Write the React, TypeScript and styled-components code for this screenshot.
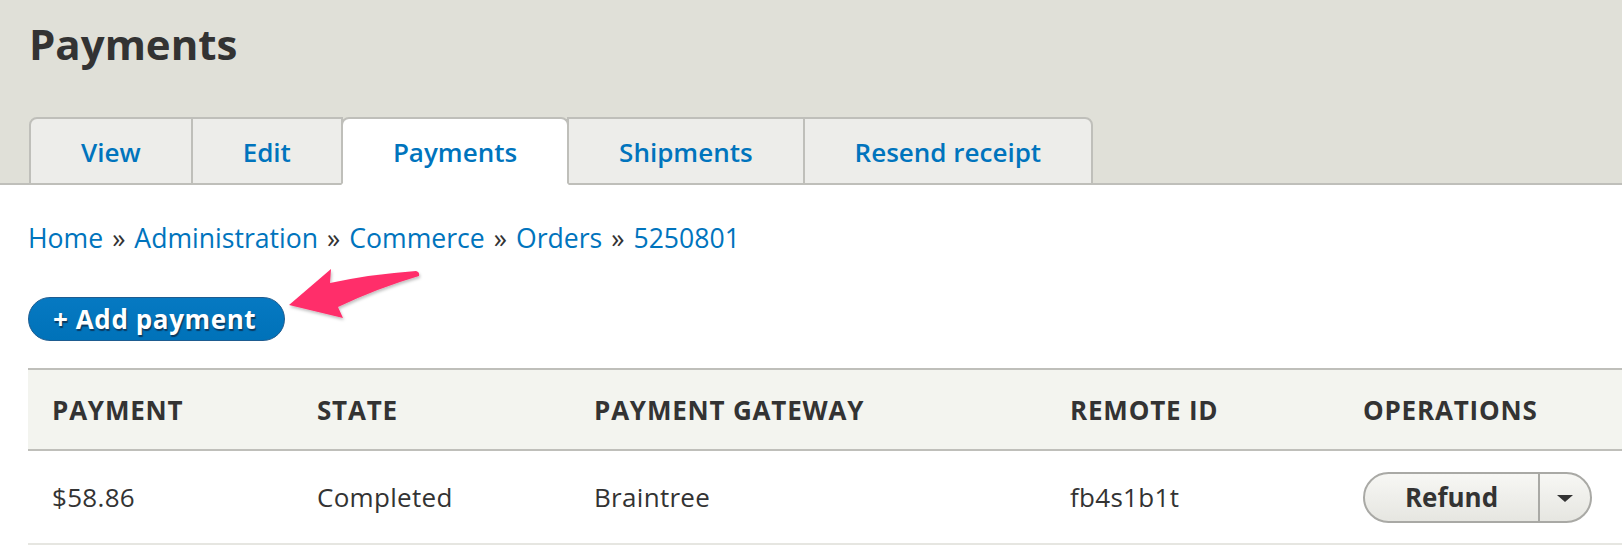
import React from "react";
import styled, { createGlobalStyle } from "styled-components";

const GlobalStyle = createGlobalStyle`
  html, body {
    margin: 0;
    padding: 0;
    background: #ffffff;
    overflow: hidden;
  }
  body {
    font-family: "Open Sans", "Noto Sans", "DejaVu Sans", sans-serif;
    color: #333333;
  }
`;

const Page = styled.div`
  position: relative;
  width: 1622px;
  height: 558px;
  overflow: hidden;
`;

const Header = styled.header`
  background: #e0e0d8;
  padding: 18px 0 0 29px;
  border-bottom: 2px solid #bfbfba;
`;

const Title = styled.h1`
  margin: 0;
  font-size: 42px;
  line-height: 52px;
  font-weight: 700;
  color: #333333;
`;

const Tabs = styled.ul`
  display: flex;
  list-style: none;
  margin: 47px 0 -2px 0;
  padding: 0;
`;

const Tab = styled.li<{ $active?: boolean }>`
  margin-left: -2px;
  &:first-child {
    margin-left: 0;
  }
  border: 2px solid #bfbfba;
  border-bottom-color: ${(p) => (p.$active ? "#ffffff" : "#bfbfba")};
  border-radius: ${(p) => (p.$active ? "8px 8px 0 0" : "0")};
  &:first-child {
    border-top-left-radius: 8px;
  }
  &:last-child {
    border-top-right-radius: 8px;
  }
  background: ${(p) => (p.$active ? "#ffffff" : "#ededea")};
  position: relative;
  z-index: ${(p) => (p.$active ? 1 : 0)};
`;

const TabLink = styled.a`
  display: block;
  padding: 17px 50px 15px;
  font-size: 26px;
  line-height: 32px;
  font-weight: 600;
  color: #0074bd;
  text-decoration: none;
`;

const Content = styled.main`
  padding: 37px 0 0 28px;
`;

const Breadcrumb = styled.nav`
  font-size: 26.6px;
  line-height: 32px;
  color: #333333;
`;

const Crumb = styled.a`
  color: #0074bd;
  text-decoration: none;
`;

const Sep = styled.span`
  color: #333333;
  margin: 0 9px;
`;

const ActionButton = styled.button`
  display: inline-block;
  margin-top: 43px;
  height: 44px;
  padding: 0 28px 0 24px;
  border: 1px solid #1e5c90;
  border-radius: 22px;
  background: linear-gradient(#0679c2, #0072b9);
  color: #ffffff;
  font-family: inherit;
  font-size: 26px;
  line-height: 42px;
  font-weight: 700;
  letter-spacing: 0.6px;
  text-shadow: 1px 2px 1px #0b3a60;
  cursor: pointer;
`;

const Table = styled.table`
  margin-top: 27px;
  width: 1594px;
  border-collapse: collapse;
  table-layout: fixed;
`;

const HeadCell = styled.th`
  text-align: left;
  background: #f3f4ef;
  border-top: 2px solid #bfbfba;
  border-bottom: 2px solid #bfbfba;
  height: 79px;
  padding: 0 0 0 24px;
  font-size: 26px;
  line-height: 32px;
  font-weight: 700;
  letter-spacing: 0.8px;
  text-transform: uppercase;
  color: #333333;
  vertical-align: middle;
`;

const Cell = styled.td`
  border-bottom: 2px solid #e6e6e1;
  height: 92px;
  padding: 0 0 0 24px;
  font-size: 26px;
  line-height: 32px;
  letter-spacing: 0.3px;
  color: #333333;
  vertical-align: middle;
`;

const Dropbutton = styled.div`
  display: inline-flex;
  height: 51px;
  border: 2px solid #a9a9a5;
  border-radius: 26px;
  background: linear-gradient(#f7f7f4, #e6e6e1);
  box-sizing: border-box;
  overflow: hidden;
  vertical-align: middle;
`;

const DropMain = styled.a`
  display: flex;
  align-items: center;
  justify-content: center;
  width: 173px;
  font-size: 26px;
  font-weight: 700;
  letter-spacing: 0;
  color: #333333;
  text-decoration: none;
  border-right: 2px solid #a9a9a5;
`;

const DropToggle = styled.span`
  display: flex;
  align-items: center;
  justify-content: center;
  width: 50px;
`;

const Caret = styled.span`
  width: 0;
  height: 0;
  border-left: 8px solid transparent;
  border-right: 8px solid transparent;
  border-top: 7px solid #333333;
  margin-top: 2px;
`;

const Annotation = styled.svg`
  position: absolute;
  left: 0;
  top: 0;
  pointer-events: none;
`;

const columns = [265, 277, 476, 293, 283];

export default function App() {
  return (
    <Page>
      <GlobalStyle />
      <Header>
        <Title>Payments</Title>
        <Tabs>
          <Tab><TabLink href="#">View</TabLink></Tab>
          <Tab><TabLink href="#">Edit</TabLink></Tab>
          <Tab $active><TabLink href="#">Payments</TabLink></Tab>
          <Tab><TabLink href="#">Shipments</TabLink></Tab>
          <Tab><TabLink href="#">Resend receipt</TabLink></Tab>
        </Tabs>
      </Header>
      <Content>
        <Breadcrumb>
          <Crumb href="#">Home</Crumb>
          <Sep>»</Sep>
          <Crumb href="#">Administration</Crumb>
          <Sep>»</Sep>
          <Crumb href="#">Commerce</Crumb>
          <Sep>»</Sep>
          <Crumb href="#">Orders</Crumb>
          <Sep>»</Sep>
          <Crumb href="#">5250801</Crumb>
        </Breadcrumb>
        <ActionButton>+ Add payment</ActionButton>
        <Table>
          <colgroup>
            {columns.map((w, i) => (
              <col key={i} style={{ width: w }} />
            ))}
          </colgroup>
          <thead>
            <tr>
              <HeadCell>Payment</HeadCell>
              <HeadCell>State</HeadCell>
              <HeadCell>Payment gateway</HeadCell>
              <HeadCell>Remote ID</HeadCell>
              <HeadCell>Operations</HeadCell>
            </tr>
          </thead>
          <tbody>
            <tr>
              <Cell>$58.86</Cell>
              <Cell>Completed</Cell>
              <Cell>Braintree</Cell>
              <Cell>fb4s1b1t</Cell>
              <Cell>
                <Dropbutton>
                  <DropMain href="#">Refund</DropMain>
                  <DropToggle><Caret /></DropToggle>
                </Dropbutton>
              </Cell>
            </tr>
          </tbody>
        </Table>
      </Content>
      <Annotation width="1622" height="558" viewBox="0 0 1622 558">
        <defs>
          <filter id="arrowShadow" x="-20%" y="-20%" width="140%" height="140%">
            <feDropShadow dx="1" dy="2" stdDeviation="1.5" floodColor="#000" floodOpacity="0.25" />
          </filter>
        </defs>
        <path
          d="M289 305 L331 269 L330 283 Q372 274 416 271 Q420 272 419 276 Q378 288 338 307 L343 318 Z"
          fill="#ff2e6b"
          filter="url(#arrowShadow)"
        />
      </Annotation>
    </Page>
  );
}
